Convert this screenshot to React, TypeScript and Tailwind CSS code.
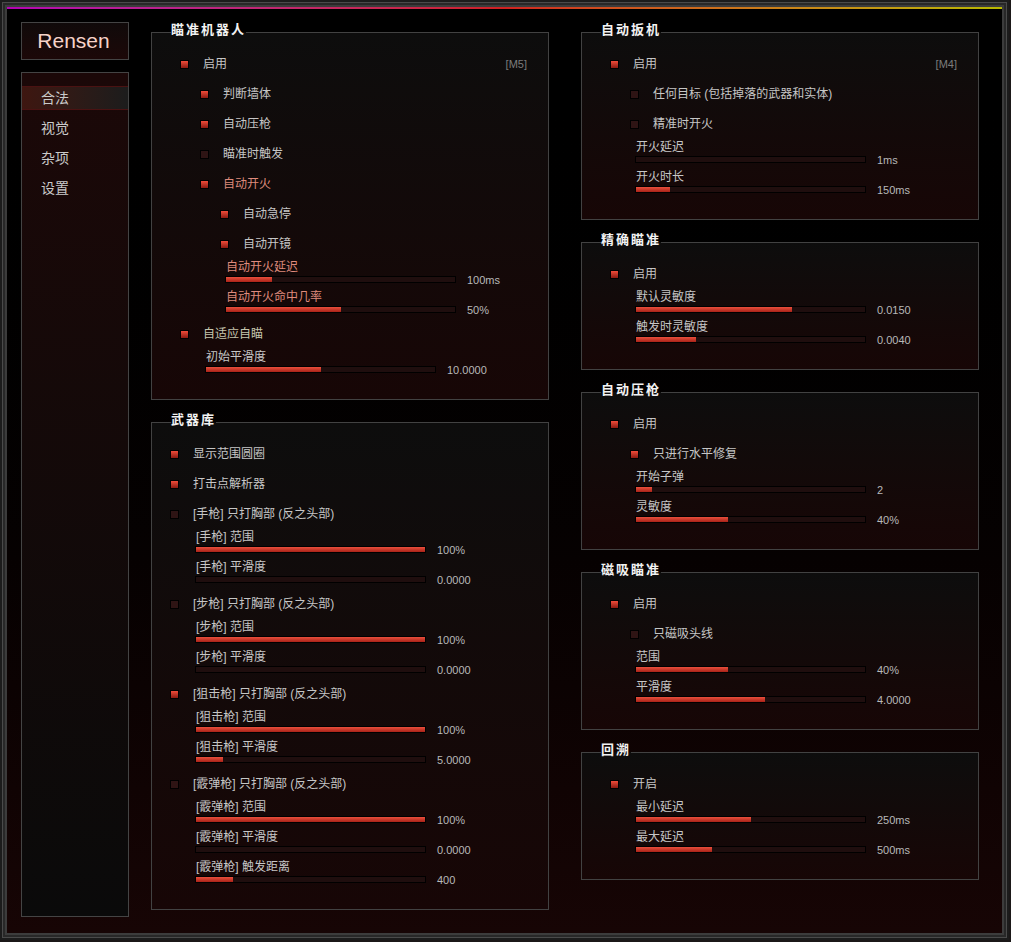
import React from 'react';

type Row =
  | { kind: 'cb'; pad: string; label: string; on: boolean; tone?: string; hint?: string }
  | { kind: 'sl'; pad: string; label: string; pct: number; value: string; tone?: string };

type Group = { title: string; rows: Row[] };

const RED = 'text-[#de8a7c]';

const aimbot: Group = {
  title: '瞄准机器人',
  rows: [
    { kind: 'cb', pad: 'pl-[28px]', label: '启用', on: true, hint: '[M5]' },
    { kind: 'cb', pad: 'pl-[48px]', label: '判断墙体', on: true },
    { kind: 'cb', pad: 'pl-[48px]', label: '自动压枪', on: true },
    { kind: 'cb', pad: 'pl-[48px]', label: '瞄准时触发', on: false },
    { kind: 'cb', pad: 'pl-[48px]', label: '自动开火', on: true, tone: RED },
    { kind: 'cb', pad: 'pl-[68px]', label: '自动急停', on: true },
    { kind: 'cb', pad: 'pl-[68px]', label: '自动开镜', on: true },
    { kind: 'sl', pad: 'pl-[73px]', label: '自动开火延迟', pct: 20, value: '100ms', tone: RED },
    { kind: 'sl', pad: 'pl-[73px]', label: '自动开火命中几率', pct: 50, value: '50%', tone: RED },
    { kind: 'cb', pad: 'pl-[28px]', label: '自适应自瞄', on: true, tone: 'text-[#c6c6ae]' },
    { kind: 'sl', pad: 'pl-[53px]', label: '初始平滑度', pct: 50, value: '10.0000' },
  ],
};

const armory: Group = {
  title: '武器库',
  rows: [
    { kind: 'cb', pad: 'pl-[18px]', label: '显示范围圆圈', on: true },
    { kind: 'cb', pad: 'pl-[18px]', label: '打击点解析器', on: true },
    { kind: 'cb', pad: 'pl-[18px]', label: '[手枪] 只打胸部 (反之头部)', on: false },
    { kind: 'sl', pad: 'pl-[43px]', label: '[手枪] 范围', pct: 100, value: '100%' },
    { kind: 'sl', pad: 'pl-[43px]', label: '[手枪] 平滑度', pct: 0, value: '0.0000' },
    { kind: 'cb', pad: 'pl-[18px]', label: '[步枪] 只打胸部 (反之头部)', on: false },
    { kind: 'sl', pad: 'pl-[43px]', label: '[步枪] 范围', pct: 100, value: '100%' },
    { kind: 'sl', pad: 'pl-[43px]', label: '[步枪] 平滑度', pct: 0, value: '0.0000' },
    { kind: 'cb', pad: 'pl-[18px]', label: '[狙击枪] 只打胸部 (反之头部)', on: true },
    { kind: 'sl', pad: 'pl-[43px]', label: '[狙击枪] 范围', pct: 100, value: '100%' },
    { kind: 'sl', pad: 'pl-[43px]', label: '[狙击枪] 平滑度', pct: 12, value: '5.0000' },
    { kind: 'cb', pad: 'pl-[18px]', label: '[霰弹枪] 只打胸部 (反之头部)', on: false },
    { kind: 'sl', pad: 'pl-[43px]', label: '[霰弹枪] 范围', pct: 100, value: '100%' },
    { kind: 'sl', pad: 'pl-[43px]', label: '[霰弹枪] 平滑度', pct: 0, value: '0.0000' },
    { kind: 'sl', pad: 'pl-[43px]', label: '[霰弹枪] 触发距离', pct: 16, value: '400' },
  ],
};

const rightGroups: Group[] = [
  {
    title: '自动扳机',
    rows: [
      { kind: 'cb', pad: 'pl-[28px]', label: '启用', on: true, hint: '[M4]' },
      { kind: 'cb', pad: 'pl-[48px]', label: '任何目标 (包括掉落的武器和实体)', on: false },
      { kind: 'cb', pad: 'pl-[48px]', label: '精准时开火', on: false },
      { kind: 'sl', pad: 'pl-[53px]', label: '开火延迟', pct: 0, value: '1ms' },
      { kind: 'sl', pad: 'pl-[53px]', label: '开火时长', pct: 15, value: '150ms' },
    ],
  },
  {
    title: '精确瞄准',
    rows: [
      { kind: 'cb', pad: 'pl-[28px]', label: '启用', on: true },
      { kind: 'sl', pad: 'pl-[53px]', label: '默认灵敏度', pct: 68, value: '0.0150' },
      { kind: 'sl', pad: 'pl-[53px]', label: '触发时灵敏度', pct: 26, value: '0.0040' },
    ],
  },
  {
    title: '自动压枪',
    rows: [
      { kind: 'cb', pad: 'pl-[28px]', label: '启用', on: true },
      { kind: 'cb', pad: 'pl-[48px]', label: '只进行水平修复', on: true },
      { kind: 'sl', pad: 'pl-[53px]', label: '开始子弹', pct: 7, value: '2' },
      { kind: 'sl', pad: 'pl-[53px]', label: '灵敏度', pct: 40, value: '40%' },
    ],
  },
  {
    title: '磁吸瞄准',
    rows: [
      { kind: 'cb', pad: 'pl-[28px]', label: '启用', on: true },
      { kind: 'cb', pad: 'pl-[48px]', label: '只磁吸头线', on: false },
      { kind: 'sl', pad: 'pl-[53px]', label: '范围', pct: 40, value: '40%' },
      { kind: 'sl', pad: 'pl-[53px]', label: '平滑度', pct: 56.5, value: '4.0000' },
    ],
  },
  {
    title: '回溯',
    rows: [
      { kind: 'cb', pad: 'pl-[28px]', label: '开启', on: true },
      { kind: 'sl', pad: 'pl-[53px]', label: '最小延迟', pct: 50, value: '250ms' },
      { kind: 'sl', pad: 'pl-[53px]', label: '最大延迟', pct: 33, value: '500ms' },
    ],
  },
];

const tabs = ['合法', '视觉', '杂项', '设置'];

const FONT = "font-['Liberation_Sans','Noto_Sans_CJK_SC',sans-serif]";

const Check: React.FC<{ on: boolean }> = ({ on }) => (
  <span
    className={`block w-[9px] h-[9px] border border-black shrink-0 ${
      on ? 'bg-linear-to-b from-[#f04c3a] to-[#8a1a12]' : 'bg-[#2e1414]'
    }`}
  />
);

const RowView: React.FC<{ row: Row }> = ({ row }) => {
  const tone = row.tone ?? 'text-[#c6c6c6]';

  if (row.kind === 'cb') {
    return (
      <div className={`h-[30px] flex items-center pr-[21px] ${row.pad}`}>
        <Check on={row.on} />
        <span className={`ml-[14px] flex-1 text-[12px] leading-[14px] ${tone}`}>{row.label}</span>
        {row.hint && <span className="text-[11px] text-[#7c7c7c]">{row.hint}</span>}
      </div>
    );
  }

  const fill = Math.round((229 * row.pct) / 100);
  return (
    <div className={`h-[30px] pt-[1px] ${row.pad}`}>
      <div className={`h-[14px] pl-[1px] text-[12px] leading-[14px] ${tone}`}>{row.label}</div>
      <div className="mt-[2px] h-[7px] flex items-center">
        <div className="w-[231px] h-[7px] border border-black bg-[#1f0e0e]">
          <div
            className="h-full bg-linear-to-b from-[#ea4e3c] to-[#a82218]"
            style={{ width: `${fill}px` }}
          />
        </div>
        <span className="ml-[11px] h-[12px] text-[11px] leading-[12px] text-[#b8b8b8]">{row.value}</span>
      </div>
    </div>
  );
};

const GroupBox: React.FC<{ group: Group }> = ({ group }) => (
  <div className="w-[398px] border-x border-b border-[#424242] bg-linear-to-b from-[#0d0d0d] to-[#170606]">
    {/* 标题压在上边框上 */}
    <div className="flex h-px items-start">
      <div className="w-[19px] h-px bg-[#424242]" />
      <span className="-mt-[9px] h-[14px] leading-[14px] text-[13px] font-bold tracking-[2px] text-[#f2f2f2] shrink-0">
        {group.title}
      </span>
      <div className="flex-1 h-px bg-[#424242]" />
    </div>
    <div className="pt-[16px] pb-[20px]">
      {group.rows.map((row, i) => (
        <RowView key={i} row={row} />
      ))}
    </div>
  </div>
);

export default function App() {
  return (
    <div className={`w-[1011px] h-[942px] bg-[#1b1818] ${FONT}`}>
      <div className="w-[1009px] h-[940px] p-[2px] bg-[#1c1c1c]">
        <div className="h-full border border-[#4a4a4a] bg-[#282828] p-[2px]">
          <div className="h-full border-2 border-[#3c3c3c] bg-linear-to-b from-black to-[#170505] flex flex-col">
            <div className="h-[2px] bg-linear-to-r from-[#b400b4] via-[#d02020] to-[#b8b800]" />

            <div className="flex pt-[13px] pl-[14px]">
              {/* 侧边栏 */}
              <div className="w-[108px] shrink-0">
                <div className="h-[38px] border border-[#444] bg-linear-to-b from-[#100a0a] to-[#1c0808] flex items-center justify-center">
                  <span className="-ml-[3px] text-[21px] text-[#f6d2c8] font-['Liberation_Sans',sans-serif]">Rensen</span>
                </div>
                <div className="mt-[12px] h-[845px] border border-[#444] bg-linear-to-b from-[#1b0808] to-[#0a0a0a] pt-[13px] flex flex-col gap-[6px]">
                  {tabs.map((t, i) => (
                    <div
                      key={t}
                      className={`h-[24px] flex items-center pl-[19px] text-[14px] text-[#cacaca] ${
                        i === 0 ? 'border-y border-[#4a1212] bg-linear-to-r from-[#3e1610] to-[#1c1c1c]' : ''
                      }`}
                    >
                      {t}
                    </div>
                  ))}
                </div>
              </div>

              {/* 左栏 */}
              <div className="ml-[22px] mt-[10px] flex flex-col gap-[22px]">
                <GroupBox group={aimbot} />
                <GroupBox group={armory} />
              </div>

              {/* 右栏 */}
              <div className="ml-[32px] mt-[10px] flex flex-col gap-[22px]">
                {rightGroups.map((g) => (
                  <GroupBox key={g.title} group={g} />
                ))}
              </div>
            </div>
          </div>
        </div>
      </div>
    </div>
  );
}
